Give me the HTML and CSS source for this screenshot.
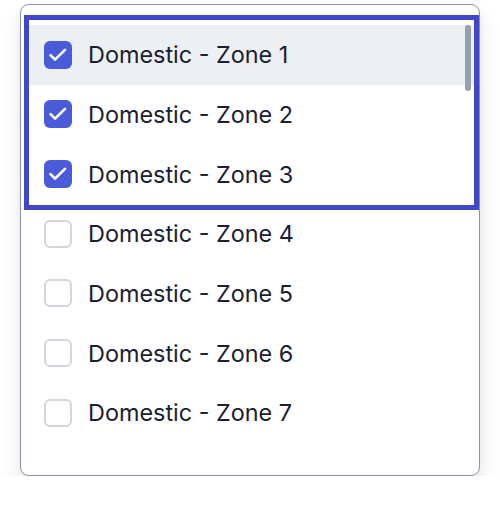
FILE: index.html
```html
<!DOCTYPE html>
<html>
<head>
<meta charset="utf-8">
<link rel="stylesheet" href="styles.css">
</head>
<body>
<div class="panel">
  <ul class="list">
    <li class="row row-active"><span class="box box-checked"><svg viewBox="0 0 28 28" width="28" height="28"><path d="M6.5 14.2 L11 18.7 L21 8.8" fill="none" stroke="#fff" stroke-width="2.6" stroke-linecap="round" stroke-linejoin="round"/></svg></span><span class="label">Domestic - Zone 1</span></li>
    <li class="row"><span class="box box-checked"><svg viewBox="0 0 28 28" width="28" height="28"><path d="M6.5 14.2 L11 18.7 L21 8.8" fill="none" stroke="#fff" stroke-width="2.6" stroke-linecap="round" stroke-linejoin="round"/></svg></span><span class="label">Domestic - Zone 2</span></li>
    <li class="row"><span class="box box-checked"><svg viewBox="0 0 28 28" width="28" height="28"><path d="M6.5 14.2 L11 18.7 L21 8.8" fill="none" stroke="#fff" stroke-width="2.6" stroke-linecap="round" stroke-linejoin="round"/></svg></span><span class="label">Domestic - Zone 3</span></li>
    <li class="row"><span class="box"></span><span class="label">Domestic - Zone 4</span></li>
    <li class="row"><span class="box"></span><span class="label">Domestic - Zone 5</span></li>
    <li class="row"><span class="box"></span><span class="label">Domestic - Zone 6</span></li>
    <li class="row"><span class="box"></span><span class="label">Domestic - Zone 7</span></li>
  </ul>
  <div class="scroll-thumb"></div>
  <div class="focus-ring"></div>
</div>
</body>
</html>
```
FILE: styles.css
```css
html, body {
  margin: 0;
  padding: 0;
  background: #ffffff;
}
body {
  font-family: Inter, "Noto Sans", sans-serif;
}
.panel {
  position: relative;
  box-sizing: border-box;
  width: 460px;
  height: 472px;
  margin: 4px 0 0 20px;
  border: 1px solid #8a93a3;
  border-radius: 9px;
  background: #ffffff;
  box-shadow: 0 12px 26px rgba(17, 24, 39, 0.09), 0 3px 8px rgba(17, 24, 39, 0.05);
  padding: 20px 4px 0 4px;
}
.list {
  list-style: none;
  margin: 0;
  padding: 0;
}
.row {
  display: flex;
  align-items: center;
  gap: 16px;
  height: 59.67px;
  padding-left: 19px;
}
.row-active {
  background: #edf0f3;
}
.box {
  box-sizing: border-box;
  width: 28px;
  height: 28px;
  border-radius: 6px;
  border: 2px solid #d2d7df;
  background: #ffffff;
  display: flex;
  flex: none;
}
.box-checked {
  border: none;
  background: #4a5bd9;
}
.label {
  font-size: 23.4px;
  color: #1b2030;
  letter-spacing: 0;
}
.scroll-thumb {
  position: absolute;
  top: 20px;
  right: 8px;
  width: 6px;
  height: 66px;
  border-radius: 3px;
  background: #979fab;
}
.focus-ring {
  position: absolute;
  left: 3px;
  top: 10px;
  width: 455px;
  height: 195px;
  box-sizing: border-box;
  border: 5px solid #4047c9;
}
```
